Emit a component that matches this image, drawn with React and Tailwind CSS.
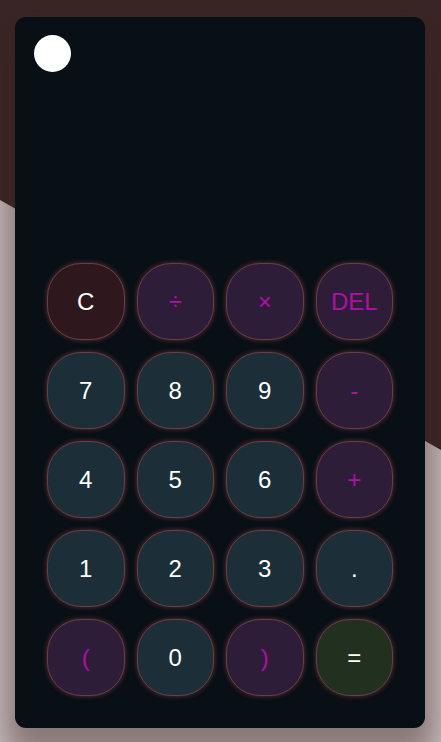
import { useState } from 'react';

const keys = [
  { label: 'C', kind: 'clear' },
  { label: '÷', kind: 'op' },
  { label: '×', kind: 'op' },
  { label: 'DEL', kind: 'op' },
  { label: '7', kind: 'num' },
  { label: '8', kind: 'num' },
  { label: '9', kind: 'num' },
  { label: '-', kind: 'op' },
  { label: '4', kind: 'num' },
  { label: '5', kind: 'num' },
  { label: '6', kind: 'num' },
  { label: '+', kind: 'op' },
  { label: '1', kind: 'num' },
  { label: '2', kind: 'num' },
  { label: '3', kind: 'num' },
  { label: '.', kind: 'num' },
  { label: '(', kind: 'op' },
  { label: '0', kind: 'num' },
  { label: ')', kind: 'op' },
  { label: '=', kind: 'eq' },
];

const kindStyles = {
  clear: 'bg-[#2e181d] text-white',
  op: 'bg-[#2e1d38] text-[#b00fa8]',
  num: 'bg-[#1c2f38] text-white',
  eq: 'bg-[#22301f] text-white',
};

export default function App() {
  const [expr, setExpr] = useState('');

  const press = (k) => {
    if (k === 'C') return setExpr('');
    if (k === 'DEL') return setExpr(expr.slice(0, -1));
    if (k === '=') return;
    setExpr(expr + k);
  };

  return (
    <div className="relative min-h-screen w-full overflow-hidden bg-[#cbc1c1] p-[15px] pt-[17px] font-['Liberation_Sans',Arial,sans-serif]">
      {/* fondo diagonal */}
      <div className="absolute inset-0 bg-[#3a2626] [clip-path:polygon(0_0,100%_0,100%_450px,0_200px)]" />

      <div className="relative flex h-[711px] w-[410px] flex-col rounded-[11px] bg-[#080f15] pb-8 pt-[18px] shadow-[0_20px_30px_10px_rgba(60,30,30,0.45)]">
        {/* pantalla */}
        <div className="flex flex-1 flex-col px-[19px]">
          <div className="h-[37px] w-[37px] rounded-full bg-white" />
          <div className="mt-auto px-[13px] pb-3 text-right text-3xl text-white">{expr}</div>
        </div>

        {/* teclado */}
        <div className="grid grid-cols-4 gap-3 px-8">
          {keys.map((k) => (
            <button
              key={k.label}
              onClick={() => press(k.label)}
              className={`flex h-[77px] items-center justify-center rounded-[34px] border border-[#6b3e44] text-[24px] shadow-[0_0_4px_1px_rgba(120,60,65,0.55)] ${kindStyles[k.kind]}`}
            >
              {k.label}
            </button>
          ))}
        </div>
      </div>
    </div>
  );
}
